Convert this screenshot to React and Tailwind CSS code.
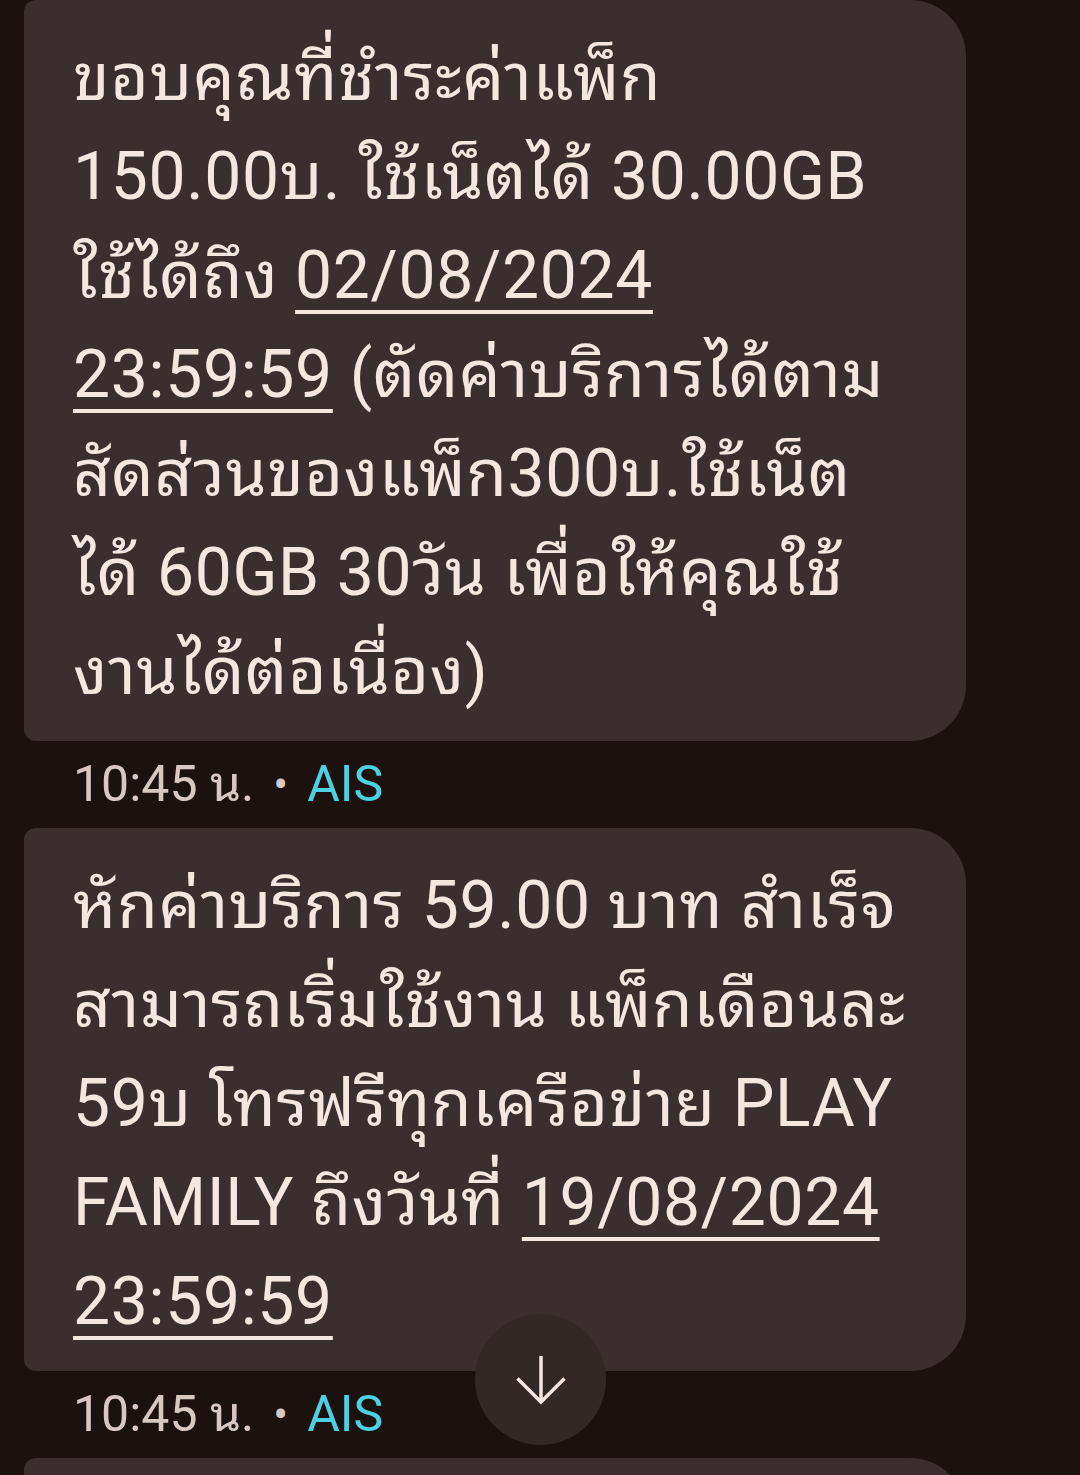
import { useState } from "react";

const textFont = {
  fontFamily:
    'Roboto, "Noto Sans Thai Looped", "Noto Sans Thai UI Looped", Loma, Waree, "Noto Sans Thai", sans-serif',
};

const Bubble = ({ lines, last }) => {
  return (
    <div
      className={
        "ml-6 w-[942px] bg-[#3a2f2e] px-[49px] text-[66px] leading-[99px] text-[#f5e6e0] rounded-l-[12px] rounded-r-[56px] " +
        (last ? "pt-7 pb-5 h-[200px]" : "pt-7 pb-5")
      }
    >
      {lines.map((line, i) => (
        <p key={i} className="whitespace-nowrap tracking-[0.01em]">
          {line}
        </p>
      ))}
    </div>
  );
};

const Stamp = () => (
  <div className="flex h-[87px] items-center pl-[73px] text-[50px] text-[#d9c7c2]">
    <span>10:45 น.</span>
    <span className="mx-[19px] text-[44px]">•</span>
    <span className="text-[#4dd0e1]">AIS</span>
  </div>
);

const U = ({ children }) => (
  <span className="underline decoration-[4px] underline-offset-[12px]">
    {children}
  </span>
);

export default function App() {
  const [unread] = useState(true);

  const first = [
    "ขอบคุณที่ชำระค่าแพ็ก",
    "150.00บ. ใช้เน็ตได้ 30.00GB",
    <>
      ใช้ได้ถึง <U>02/08/2024</U>
    </>,
    <>
      <U>23:59:59</U> (ตัดค่าบริการได้ตาม
    </>,
    "สัดส่วนของแพ็ก300บ.ใช้เน็ต",
    "ได้ 60GB 30วัน เพื่อให้คุณใช้",
    "งานได้ต่อเนื่อง)",
  ];

  const second = [
    "หักค่าบริการ 59.00 บาท สำเร็จ",
    "สามารถเริ่มใช้งาน แพ็กเดือนละ",
    "59บ โทรฟรีทุกเครือข่าย PLAY",
    <>
      FAMILY ถึงวันที่ <U>19/08/2024</U>
    </>,
    <U>23:59:59</U>,
  ];

  return (
    <div
      className="relative h-[1475px] w-full overflow-hidden bg-[#1b1210]"
      style={textFont}
    >
      <Bubble lines={first} />
      <Stamp />
      <Bubble lines={second} />
      <Stamp />
      <Bubble lines={[""]} last />

      {unread && (
        <button className="absolute left-[475px] top-[1314px] flex h-[131px] w-[131px] items-center justify-center rounded-full bg-[#322826]">
          <svg width="50" height="50" viewBox="0 0 50 50" fill="none">
            <path d="M25 1v46" stroke="#f5e6e0" strokeWidth="3.5" />
            <path
              d="M1.5 23.5 25 47l23.5-23.5"
              stroke="#f5e6e0"
              strokeWidth="3.5"
            />
          </svg>
        </button>
      )}
    </div>
  );
}
